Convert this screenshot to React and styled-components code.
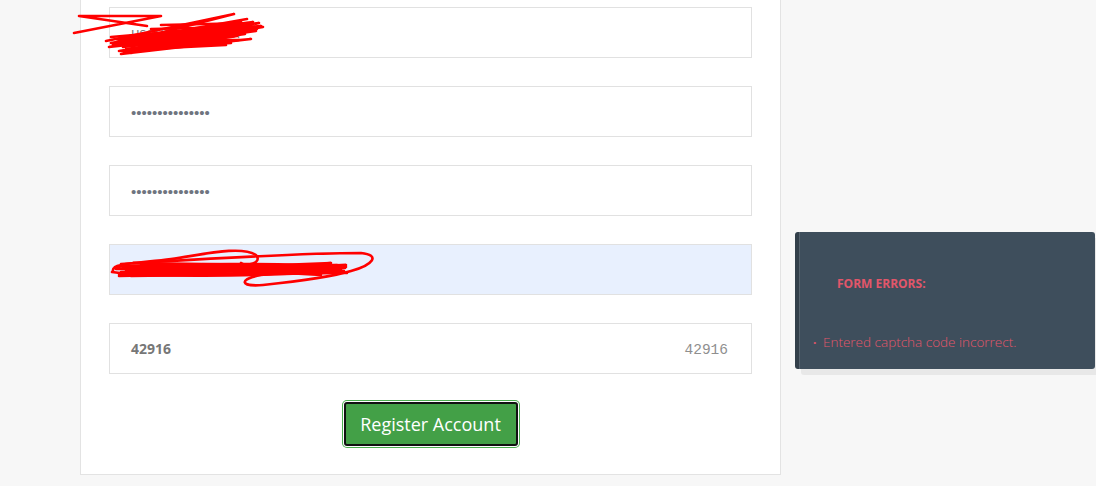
import styled, { createGlobalStyle } from "styled-components";

const GlobalStyle = createGlobalStyle`
  html, body {
    margin: 0;
    padding: 0;
    background: #f7f7f7;
    font-family: "Open Sans", "Liberation Sans", sans-serif;
  }
`;

const RedactTop = () => (
  <ScribbleSvg
    style={{ left: -40, top: 0, width: 200, height: 60 }}
    viewBox="69 7 200 60"
  >
    <path d="M78 15 L160 15 M78 15 L146 25 M160 15 L73 32" />
    <path d="M105 40 L233 13 L112 44 L262 26 L118 50 L250 38 L120 53 L240 20 L108 46 L255 30 L125 48 L230 42 L115 38 L258 22 L130 52 L236 35 L110 42 L246 18" />
    <path d="M110 36 L248 24 L116 41 L256 28 L122 46 L244 33 L128 50 L238 39 L118 39 L252 21 L132 44 L260 25 L126 35 L234 30" />
    <path d="M138 34 L220 30 M140 45 L228 40 M150 28 L240 26 M135 40 L242 32 M145 48 L225 44 M160 24 L250 22" />
  </ScribbleSvg>
);

const RedactAutofill = () => (
  <ScribbleSvg
    style={{ left: -4, top: 0, width: 280, height: 50 }}
    viewBox="105 244 280 50"
  >
    <path d="M112 270 C 110 262, 140 262, 170 258 C 200 254, 240 244, 255 254 C 262 262, 245 266, 240 262" />
    <path d="M120 263 C 200 258, 300 252, 360 252 C 380 254, 372 264, 350 270 C 330 276, 300 280, 262 284 C 238 286, 238 278, 260 274 C 300 270, 330 268, 345 266" />
    <path d="M115 268 L345 264 L118 273 L340 268 L122 266 L338 272 L130 275 L330 262 L125 270 L342 270 L140 264 L320 274" />
    <path d="M116 265 L336 266 L120 271 L344 267 L128 268 L334 270 L118 275 L328 265 L132 262 L346 272 L124 267 L336 264" />
    <path d="M111 271 C 140 276, 250 276, 343 270 M114 266 C 180 262, 280 262, 340 266" />
  </ScribbleSvg>
);

const App = () => {
  return (
    <>
      <GlobalStyle />
      <Page>
        <Card>
          <Field>
            <Value>user@exam.com</Value>
            <RedactTop />
          </Field>
          <Field>
            <Dots>•••••••••••••••</Dots>
          </Field>
          <Field>
            <Dots>•••••••••••••••</Dots>
          </Field>
          <Field $autofill>
            <Value>account name here</Value>
            <RedactAutofill />
          </Field>
          <Field $split>
            <CaptchaInput>42916</CaptchaInput>
            <CaptchaImage>42916</CaptchaImage>
          </Field>
          <RegisterButton type="button">Register Account</RegisterButton>
        </Card>
        <ErrorPanel>
          <ErrorTitle>FORM ERRORS:</ErrorTitle>
          <ErrorItem>
            <Bullet>·</Bullet>
            Entered captcha code incorrect.
          </ErrorItem>
        </ErrorPanel>
      </Page>
    </>
  );
};
export default App;

const Page = styled.div`
  display: flex;
  align-items: flex-start;
  width: 1096px;
  height: 486px;
  overflow: hidden;
`;

const Card = styled.div`
  box-sizing: border-box;
  margin-left: 80px;
  width: 701px;
  background: #fff;
  border: 1px solid #e3e3e3;
  border-top: none;
  padding: 7px 28px 28px 28px;
  display: flex;
  flex-direction: column;
  gap: 28px;
`;

const Field = styled.div`
  position: relative;
  box-sizing: border-box;
  height: 51px;
  border: 1px solid #e1e1e1;
  background: ${(p) => (p.$autofill ? "#e8f0fe" : "#fff")};
  display: flex;
  align-items: center;
  justify-content: ${(p) => (p.$split ? "space-between" : "flex-start")};
  padding: ${(p) => (p.$split ? "0 23px 0 21px" : "0 21px")};
`;

const Value = styled.span`
  font-size: 14px;
  color: #777;
`;

const Dots = styled.span`
  font-family: "Liberation Sans", sans-serif;
  font-size: 15px;
  color: #6f7580;
  letter-spacing: 0;
  padding-top: 1px;
`;

const ScribbleSvg = styled.svg`
  position: absolute;
  overflow: visible;
  pointer-events: none;
  fill: none;
  stroke: #ff0000;
  stroke-width: 2.6;
  stroke-linejoin: round;
  stroke-linecap: round;
`;

const CaptchaInput = styled.span`
  font-size: 14px;
  font-weight: 700;
  color: #777;
`;

const CaptchaImage = styled.span`
  font-family: "Liberation Mono", "DejaVu Sans Mono", monospace;
  font-size: 14.5px;
  color: #8f8f8f;
  padding-top: 2px;
`;

const RegisterButton = styled.button`
  align-self: center;
  box-sizing: border-box;
  width: 174px;
  height: 44px;
  margin: 0;
  padding: 0;
  background: #43a047;
  border: 2px solid #111;
  border-radius: 3px;
  box-shadow: 0 0 0 1px #fff, 0 0 0 2px #4caf50;
  color: #fff;
  font-family: "Open Sans", "Liberation Sans", sans-serif;
  font-size: 18px;
  cursor: pointer;
`;

const ErrorPanel = styled.div`
  box-sizing: border-box;
  margin-top: 232px;
  margin-left: 14px;
  width: 300px;
  height: 137px;
  background: #3e4e5c;
  border-left: 4px solid #323f4a;
  border-radius: 3px;
  box-shadow: inset 1px 0 0 #56636e, 6px 6px 0 #e8e8e8;
  padding: 43px 16px 17px 14px;
  display: flex;
  flex-direction: column;
`;

const ErrorTitle = styled.div`
  margin-left: 24px;
  font-size: 12px;
  line-height: 18px;
  font-weight: 700;
  color: #e2566a;
`;

const ErrorItem = styled.div`
  margin-top: 40px;
  font-size: 13.5px;
  line-height: 19px;
  font-weight: 300;
  color: #e2566a;
  display: flex;
  align-items: center;
`;

const Bullet = styled.span`
  width: 10px;
  font-size: 12px;
  font-weight: 700;
`;
